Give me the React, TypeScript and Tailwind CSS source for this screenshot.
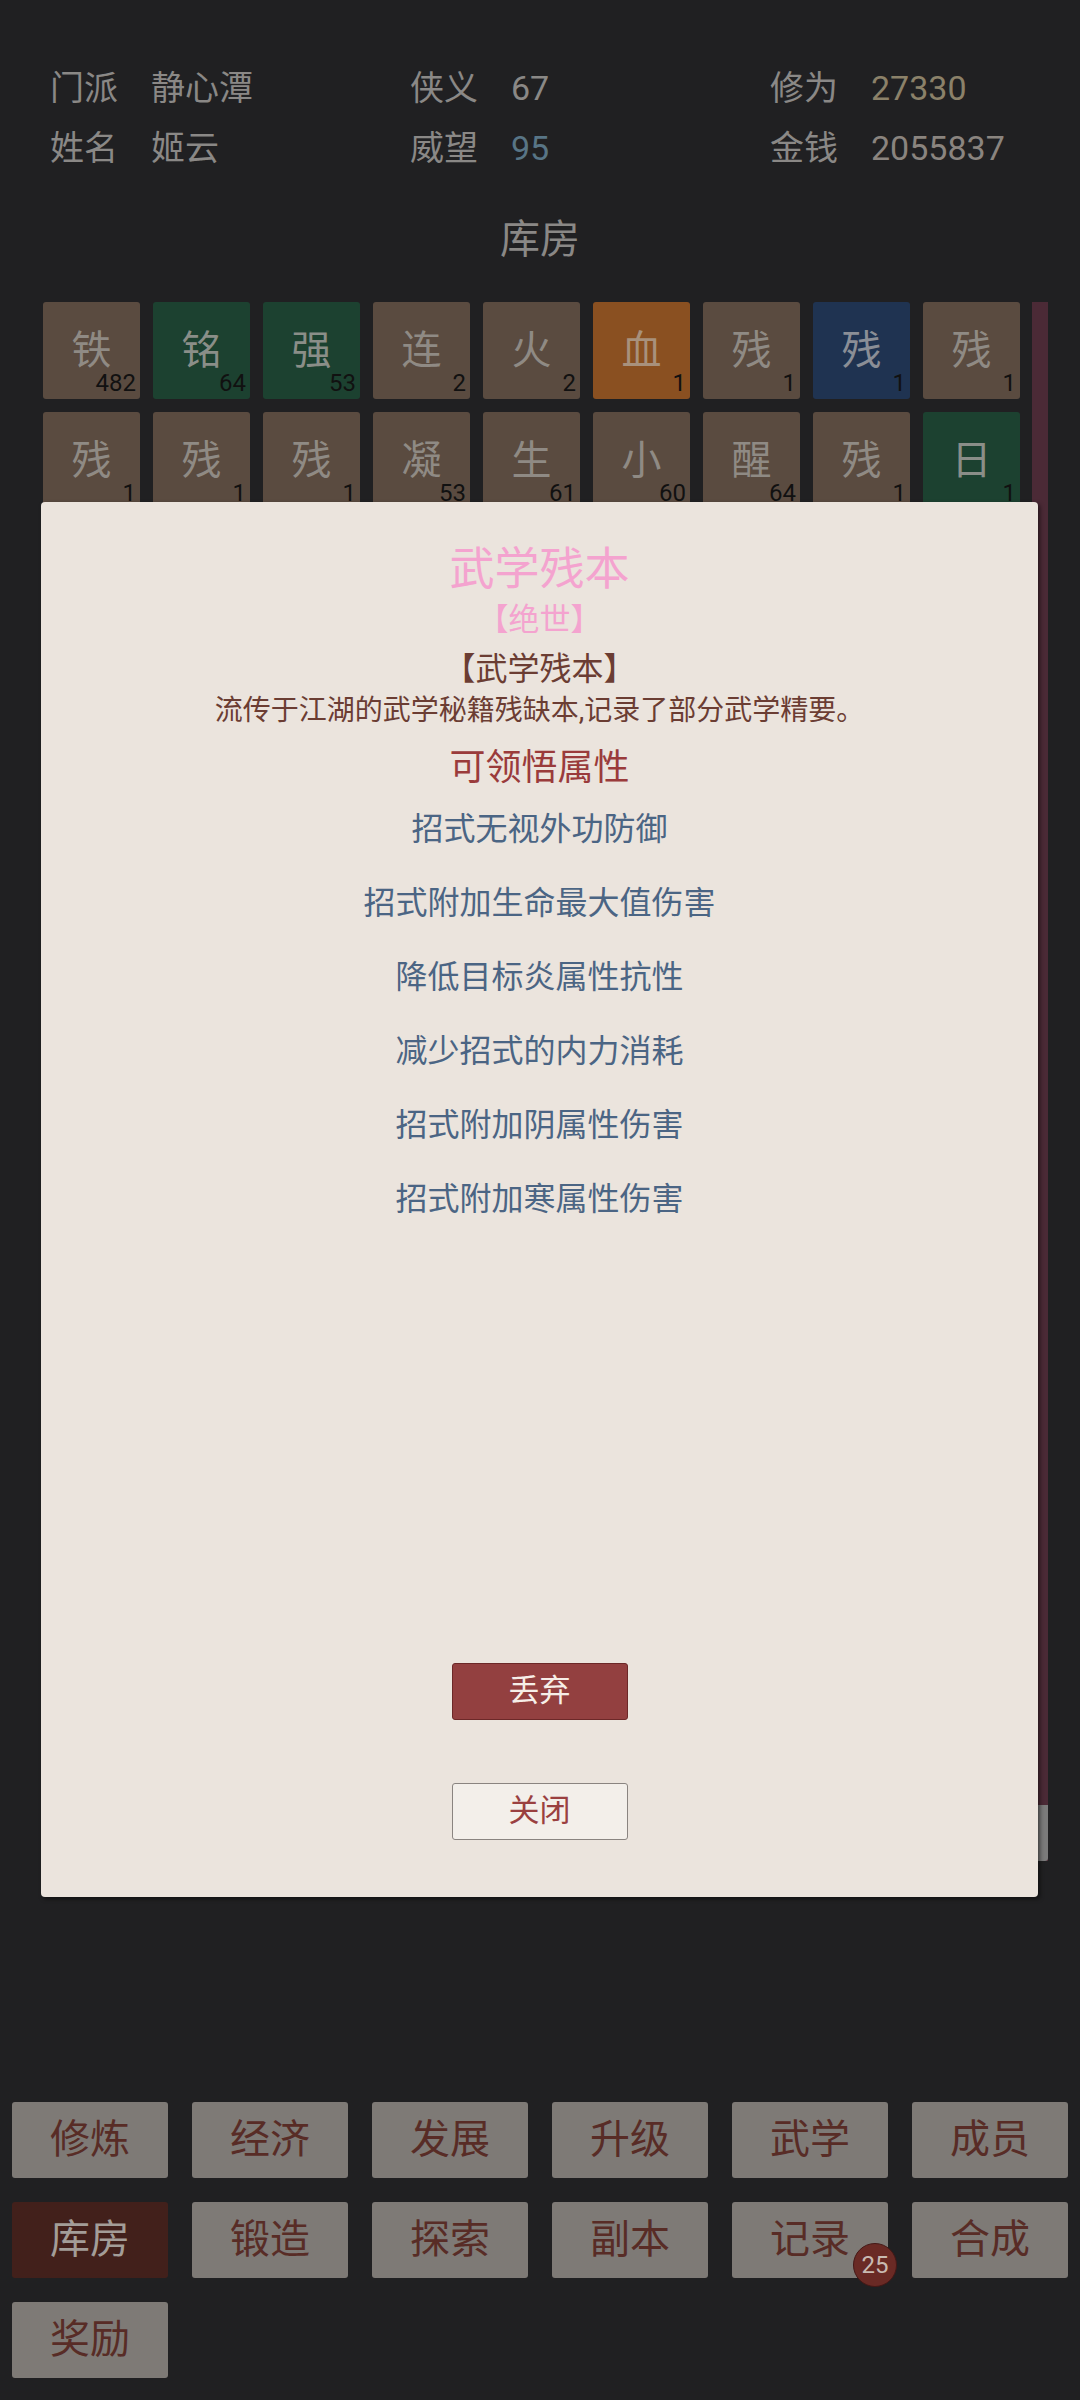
import React from "react";

const tileColors: Record<string, string> = {
  brown: "bg-[#5a4b40] text-[#8f8a84]",
  green: "bg-[#1c4130] text-[#8a8e88]",
  orange: "bg-[#8a5021] text-[#a8917c]",
  blue: "bg-[#1f3351] text-[#8a8e96]",
};

const tiles = [
  { c: "铁", n: 482, t: "brown" },
  { c: "铭", n: 64, t: "green" },
  { c: "强", n: 53, t: "green" },
  { c: "连", n: 2, t: "brown" },
  { c: "火", n: 2, t: "brown" },
  { c: "血", n: 1, t: "orange" },
  { c: "残", n: 1, t: "brown" },
  { c: "残", n: 1, t: "blue" },
  { c: "残", n: 1, t: "brown" },
  { c: "残", n: 1, t: "brown" },
  { c: "残", n: 1, t: "brown" },
  { c: "残", n: 1, t: "brown" },
  { c: "凝", n: 53, t: "brown" },
  { c: "生", n: 61, t: "brown" },
  { c: "小", n: 60, t: "brown" },
  { c: "醒", n: 64, t: "brown" },
  { c: "残", n: 1, t: "brown" },
  { c: "日", n: 1, t: "green" },
];

const attrs = [
  "招式无视外功防御",
  "招式附加生命最大值伤害",
  "降低目标炎属性抗性",
  "减少招式的内力消耗",
  "招式附加阴属性伤害",
  "招式附加寒属性伤害",
];

const navItems = [
  "修炼",
  "经济",
  "发展",
  "升级",
  "武学",
  "成员",
  "库房",
  "锻造",
  "探索",
  "副本",
  "记录",
  "合成",
  "奖励",
];

function Stat({ label, value, valueClass }: { label: string; value: string; valueClass: string }) {
  return (
    <div className="flex h-[60px] items-center">
      <span className="w-[101px] text-[#8a8886]">{label}</span>
      <span className={valueClass}>{value}</span>
    </div>
  );
}

function Tile({ c, n, t }: { c: string; n: number; t: string }) {
  return (
    <div className={`relative flex h-[97px] w-[97px] items-center justify-center rounded-[3px] ${tileColors[t]}`}>
      <span className="text-[40px] leading-none">{c}</span>
      <span className="absolute right-[4px] bottom-[4px] text-[24px] leading-none text-[#111]">{n}</span>
    </div>
  );
}

export default function App() {
  return (
    <div className="relative h-[2400px] w-[1080px] overflow-hidden bg-[#202022] font-['Roboto','Noto_Sans_CJK_SC',sans-serif]">
      <div className="grid grid-cols-[360px_360px_360px] pt-[58px] pl-[50px] text-[34px] text-[#8a8886]">
        <Stat label="门派" value="静心潭" valueClass="text-[#8a8886]" />
        <Stat label="侠义" value="67" valueClass="text-[#8a8886]" />
        <Stat label="修为" value="27330" valueClass="text-[#8b8169]" />
        <Stat label="姓名" value="姬云" valueClass="text-[#8a8886]" />
        <Stat label="威望" value="95" valueClass="text-[#587586]" />
        <Stat label="金钱" value="2055837" valueClass="text-[#8a847f]" />
      </div>

      <div className="mt-[32px] h-[60px] text-center text-[40px] leading-[60px] text-[#8a8886]">库房</div>

      <div className="mt-[32px] flex gap-[12px] pl-[43px]">
        <div className="grid h-[1559px] grid-cols-[repeat(9,97px)] content-start gap-[13px] overflow-hidden">
          {tiles.map((tile, i) => (
            <Tile key={i} {...tile} />
          ))}
        </div>
        <div className="flex h-[1559px] w-[16px] flex-col justify-end bg-[#4b2a36]">
          <div className="h-[56px] rounded-b-[3px] bg-[#7b7b7b]" />
        </div>
      </div>

      <div className="mt-[241px] grid grid-cols-[repeat(6,156px)] gap-x-[24px] gap-y-[24px] pl-[12px]">
        {navItems.map((label) => {
          const active = label === "库房";
          return (
            <div
              key={label}
              className={`relative flex h-[76px] items-center justify-center rounded-[3px] text-[40px] ${
                active ? "bg-[#42201b] text-[#a39d98]" : "bg-[#7e7a76] text-[#582c26]"
              }`}
            >
              {label}
              {label === "记录" && (
                <span className="absolute -right-[9px] -bottom-[9px] flex h-[44px] w-[44px] items-center justify-center rounded-full border border-[#451816] bg-[#6a2a25] text-[24px] text-[#c9bab2]">
                  25
                </span>
              )}
            </div>
          );
        })}
      </div>

      {/* item dialog */}
      <div className="absolute top-[502px] left-[41px] flex h-[1395px] w-[997px] flex-col items-center rounded-[4px] bg-[#ebe4dd] pt-[40px] shadow-[2px_2px_4px_rgba(0,0,0,0.5)]">
        <div className="text-[45px] leading-[56px] text-[#f4a3cf]">武学残本</div>
        <div className="text-[31px] leading-[44px] text-[#f4a3cf]">【绝世】</div>
        <div className="text-[32px] leading-[54px] text-[#6b3d33]">【武学残本】</div>
        <div className="text-[28px] leading-[30px] text-[#6b3d33]">流传于江湖的武学秘籍残缺本,记录了部分武学精要。</div>
        <div className="mt-[18px] text-[36px] leading-[48px] text-[#9a3b3b]">可领悟属性</div>
        <div className="flex flex-col items-center">
          {attrs.map((a) => (
            <div key={a} className="text-[32px] leading-[74px] text-[#4b6584]">
              {a}
            </div>
          ))}
        </div>
        <button className="mt-[427px] h-[57px] w-[176px] rounded-[3px] border border-[#6c2828] bg-[#934040] text-[31px] text-[#f6eee8]">
          丢弃
        </button>
        <button className="mt-[63px] h-[57px] w-[176px] rounded-[3px] border border-[#8a8480] bg-[#f3efea] text-[31px] text-[#9a4040]">
          关闭
        </button>
      </div>
    </div>
  );
}
